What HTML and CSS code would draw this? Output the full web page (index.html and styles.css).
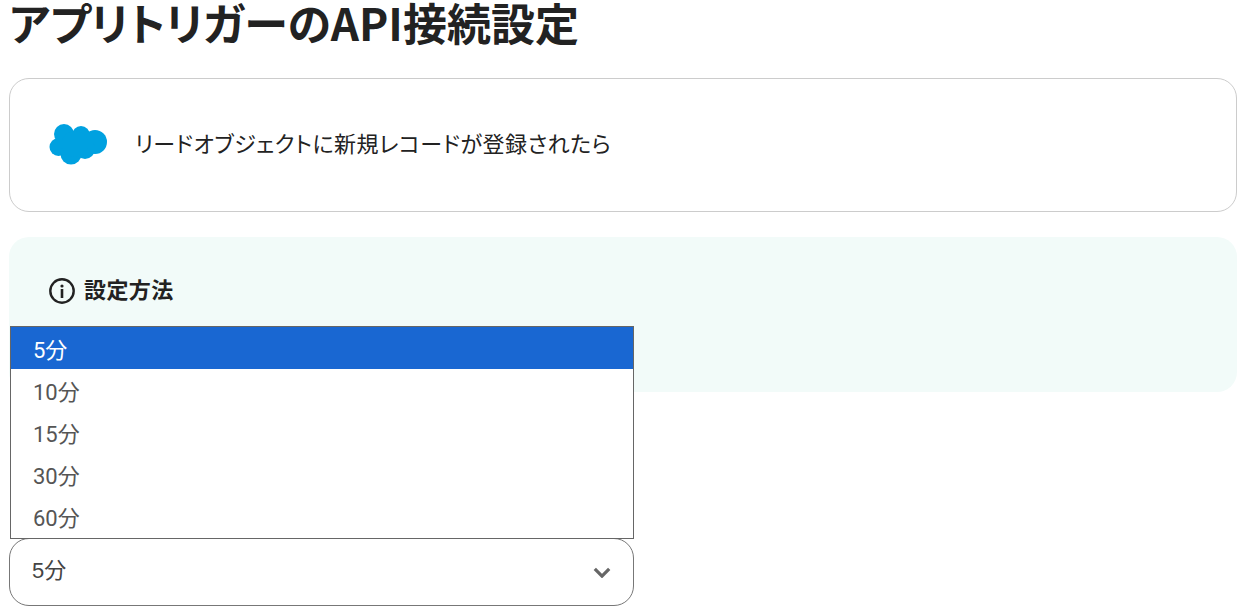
FILE: index.html
```html
<!DOCTYPE html>
<html lang="ja">
<head>
  <meta charset="UTF-8">
  <title>アプリトリガーのAPI接続設定</title>
  <link rel="stylesheet" href="styles.css">
</head>
<body>
  <h1>アプリトリガーのAPI接続設定</h1>

  <div class="app-card">
    <svg class="app-logo" viewBox="0 0 60 44" width="60" height="44">
      <g fill="#00a1e0">
        <circle cx="15" cy="12" r="10"/>
        <circle cx="32" cy="13" r="9"/>
        <circle cx="46" cy="20" r="12"/>
        <circle cx="9.5" cy="25" r="9"/>
        <circle cx="22" cy="32" r="10.5"/>
        <circle cx="36" cy="27" r="10"/>
        <circle cx="26" cy="22" r="13"/>
      </g>
    </svg>
    <span class="app-card-text">リードオブジェクトに新規レコードが登録されたら</span>
  </div>

  <div class="help-panel">
    <div class="help-title">
      <svg viewBox="0 0 26 26" width="26" height="26">
        <circle cx="13" cy="13" r="11.7" fill="none" stroke="#222" stroke-width="2.4"/>
        <circle cx="13" cy="8" r="1.6" fill="#222"/>
        <rect x="11.7" y="11" width="2.6" height="9" fill="#222"/>
      </svg>
      <span>設定方法</span>
    </div>
  </div>

  <div class="select-field">
    <div class="select-box">
      <span>5分</span>
      <svg viewBox="0 0 20 12" width="18" height="11">
        <path d="M2 2l8 8 8-8" fill="none" stroke="#666" stroke-width="3.6"/>
      </svg>
    </div>
    <ul class="select-menu">
      <li class="selected">5分</li>
      <li>10分</li>
      <li>15分</li>
      <li>30分</li>
      <li>60分</li>
    </ul>
  </div>
</body>
</html>
```

FILE: styles.css
```css
* {
  margin: 0;
  padding: 0;
  box-sizing: border-box;
}

body {
  font-family: "Noto Sans CJK JP", "Noto Sans", sans-serif;
  color: #222;
  background: #fff;
  padding: 0 8px 0 9px;
  height: 612px;
  overflow: hidden;
}

h1 {
  font-size: 44px;
  font-weight: 700;
  font-feature-settings: "palt";
  line-height: 44px;
  height: 78px;
}

.app-card {
  display: flex;
  align-items: center;
  gap: 26px;
  height: 134px;
  padding: 0 0 2px 39px;
  border: 1px solid #ccc;
  border-radius: 20px;
}

.app-logo {
  flex: none;
}

.app-card-text {
  font-size: 22px;
  font-feature-settings: "palt";
  letter-spacing: 0.5px;
  margin-bottom: 4px;
}

.help-panel {
  margin-top: 25px;
  height: 155px;
  padding: 36px 40px;
  background: #f2fbf9;
  border-radius: 20px;
}

.help-title {
  display: flex;
  align-items: flex-start;
  gap: 9px;
  font-size: 22px;
  font-weight: 700;
  letter-spacing: 0.4px;
  line-height: 30px;
}

.help-title svg {
  margin-top: 5px;
}

.select-field {
  position: relative;
  margin-top: 146px;
  width: 625px;
}

.select-box {
  display: flex;
  align-items: center;
  justify-content: space-between;
  height: 68px;
  padding: 0 22px 8px 22px;
  border: 1px solid #777;
  border-radius: 20px;
  font-family: "Liberation Sans", "Noto Sans CJK JP", sans-serif;
  font-size: 22px;
  color: #444;
}

.select-box svg {
  margin-top: 8px;
}

.select-menu {
  position: absolute;
  left: 1px;
  bottom: 67px;
  width: 624px;
  padding-bottom: 1px;
  list-style: none;
  background: #fff;
  border: 1px solid #666;
  font-family: Roboto, "Noto Sans CJK JP", sans-serif;
  font-size: 22px;
  color: #555;
}

.select-menu li {
  height: 42px;
  line-height: 48px;
  padding-left: 22px;
}

.select-menu .selected {
  background: #1967d2;
  color: #fff;
}
```
